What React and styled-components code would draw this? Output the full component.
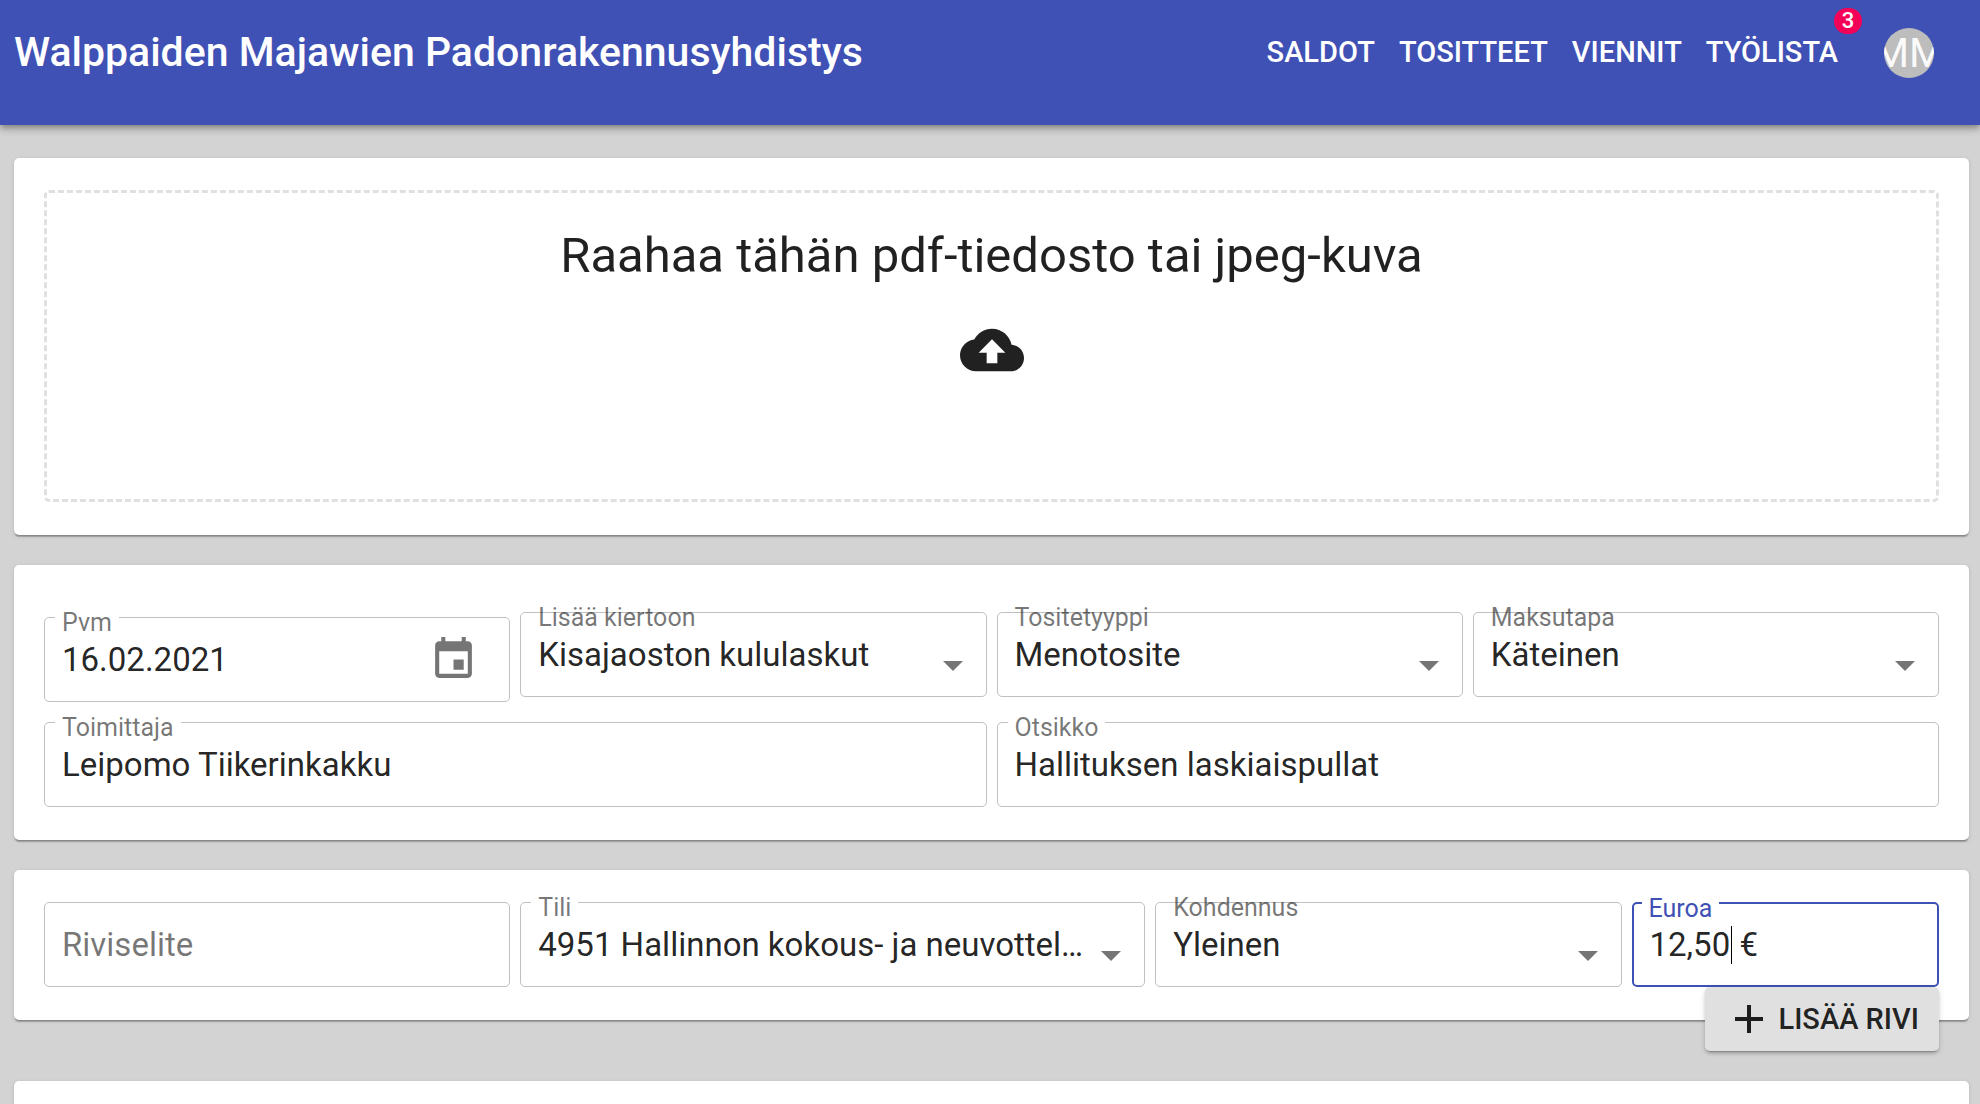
import React from 'react';
import styled, { createGlobalStyle } from 'styled-components';

const GlobalStyle = createGlobalStyle`
  *, *::before, *::after { box-sizing: border-box; }
  body {
    margin: 0;
    background: #d3d3d3;
    color: rgba(0, 0, 0, 0.87);
    font-family: Roboto, "Liberation Sans", sans-serif;
    font-size: 33px;
  }
  button, input, select { font: inherit; color: inherit; }
`;

const Page = styled.div`
  display: flex;
  flex-direction: column;
  height: 100vh;
  overflow: hidden;
`;

const AppBar = styled.header`
  flex: none;
  display: flex;
  align-items: flex-start;
  justify-content: space-between;
  padding: 28px 46px 47px 14px;
  background: #3f51b5;
  color: #fff;
  box-shadow: 0 3px 5px -1px rgba(0, 0, 0, 0.2), 0 5px 6px rgba(0, 0, 0, 0.14),
    0 1px 13px rgba(0, 0, 0, 0.12);
`;

const Title = styled.h1`
  margin: 0;
  font-size: 41px;
  font-weight: 500;
  line-height: 48px;
`;

const Nav = styled.nav`
  display: flex;
  align-items: flex-start;
  gap: 24px;
`;

const NavLink = styled.a`
  position: relative;
  color: inherit;
  font-size: 29px;
  font-weight: 500;
  line-height: 48px;
  text-decoration: none;
  text-transform: uppercase;
`;

const Badge = styled.span`
  position: absolute;
  top: -20px;
  right: -24px;
  display: grid;
  place-items: center;
  width: 28px;
  height: 26px;
  border-radius: 13px;
  background: #f50057;
  font-size: 22px;
  line-height: 26px;
`;

const Avatar = styled.button`
  display: flex;
  align-items: center;
  justify-content: center;
  width: 50px;
  height: 50px;
  margin-left: 22px;
  padding: 0;
  border: 0;
  border-radius: 50%;
  overflow: hidden;
  background: #bdbdbd;
  color: #fafafa;
  font-size: 41px;
  line-height: 50px;
`;

const Main = styled.main`
  display: flex;
  flex-direction: column;
  gap: 30px;
  padding: 33px 11px 0 14px;
`;

const Card = styled.section`
  flex: none;
  min-height: ${(p) => (p.$tall ? '200px' : '0')};
  padding: ${(p) => (p.$roomy ? '47px' : '32px')} 30px 33px;
  border-radius: 5px;
  background: #fff;
  box-shadow: 0 3px 1px -1px rgba(0, 0, 0, 0.2), 0 1px 1px rgba(0, 0, 0, 0.14),
    0 1px 4px rgba(0, 0, 0, 0.12);
`;

const DropZone = styled.label`
  display: flex;
  flex-direction: column;
  align-items: center;
  gap: 32px;
  height: 312px;
  padding-top: 33px;
  border: 3px dashed rgba(0, 0, 0, 0.12);
  border-radius: 5px;
  font-size: 49px;
  line-height: 60px;
`;

const FileInput = styled.input`
  position: absolute;
  width: 1px;
  height: 1px;
  opacity: 0;
`;

const Icon = styled.svg`
  flex: none;
  display: block;
  width: ${(p) => p.$size}px;
  height: ${(p) => p.$size}px;
  fill: currentColor;
`;

const Grid = styled.div`
  display: grid;
  grid-template-columns: repeat(12, minmax(0, 1fr));
  align-items: start;
  column-gap: 10px;
  row-gap: 20px;
`;

const Outline = styled.div`
  grid-column: span ${(p) => p.$span};
  position: relative;
  display: flex;
  align-items: center;
  height: 85px;
  margin-top: ${(p) => (p.$lowered ? '5px' : '0')};
  padding: 0 ${(p) => (p.$focused ? '16px' : '17px')};
  border: ${(p) => (p.$focused ? '2px solid #3f51b5' : '1px solid #c0c0c0')};
  border-radius: 5px;
`;

const Label = styled.label`
  position: absolute;
  top: -9px;
  left: ${(p) => (p.$focused ? '8px' : '10px')};
  padding: 0 7px;
  background: ${(p) => (p.$notched ? '#fff' : 'transparent')};
  color: ${(p) => (p.$focused ? '#3f51b5' : 'rgba(0, 0, 0, 0.54)')};
  font-size: 25px;
  line-height: 28px;
  white-space: nowrap;
  pointer-events: none;
`;

const TextInput = styled.input`
  flex: ${(p) => (p.$narrow ? 'none' : '1')};
  width: ${(p) => (p.$narrow ? '81px' : 'auto')};
  min-width: 0;
  height: 48px;
  padding: 0;
  border: 0;
  outline: 0;
  background: transparent;
  &::placeholder { color: rgba(0, 0, 0, 0.54); opacity: 1; }
`;

const Select = styled.select`
  flex: 1;
  min-width: 0;
  height: 83px;
  margin: 0 -17px;
  padding: 0 54px 0 17px;
  border: 0;
  outline: 0;
  appearance: none;
  background: transparent;
  text-overflow: ellipsis;
`;

const Arrow = styled(Icon)`
  position: absolute;
  top: calc(50% - 14px);
  right: 9px;
  color: rgba(0, 0, 0, 0.54);
  pointer-events: none;
`;

const IconButton = styled.button`
  flex: none;
  margin-right: 14px;
  padding: 0;
  border: 0;
  background: transparent;
  color: rgba(0, 0, 0, 0.54);
`;

const Caret = styled.span`
  width: 1px;
  height: 38px;
  background: #000;
`;

const Adornment = styled.span`
  margin-left: 8px;
`;

const Actions = styled.div`
  display: flex;
  justify-content: flex-end;
  margin-top: -63px;
  padding-right: 30px;
`;

const AddButton = styled.button`
  position: relative;
  display: flex;
  align-items: center;
  gap: 6px;
  height: 64px;
  padding: 0 20px;
  border: 0;
  border-radius: 5px;
  background: #e0e0e0;
  font-size: 29px;
  font-weight: 500;
  text-transform: uppercase;
  box-shadow: 0 4px 1px -3px rgba(0, 0, 0, 0.2), 0 3px 3px rgba(0, 0, 0, 0.14),
    0 1px 6px rgba(0, 0, 0, 0.12);
`;

function Field({ id, label, span, lowered, notched = true, focused, children }) {
  return (
    <Outline $span={span} $lowered={lowered} $focused={focused}>
      {label && (
        <Label htmlFor={id} $notched={notched} $focused={focused}>
          {label}
        </Label>
      )}
      {children}
    </Outline>
  );
}

function SelectField({ id, value, ...field }) {
  return (
    <Field id={id} {...field}>
      <Select id={id} defaultValue={value}>
        <option value={value}>{value}</option>
      </Select>
      <Arrow $size={48} viewBox="0 0 24 24" aria-hidden="true">
        <path d="M7 10l5 5 5-5z" />
      </Arrow>
    </Field>
  );
}

export default function App() {
  return (
    <Page>
      <GlobalStyle />
      <AppBar>
        <Title>Walppaiden Majawien Padonrakennusyhdistys</Title>
        <Nav>
          <NavLink href="#saldot">Saldot</NavLink>
          <NavLink href="#tositteet">Tositteet</NavLink>
          <NavLink href="#viennit">Viennit</NavLink>
          <NavLink href="#tyolista">
            Työlista
            <Badge>3</Badge>
          </NavLink>
          <Avatar type="button">MM</Avatar>
        </Nav>
      </AppBar>
      <Main>
        <Card>
          <DropZone>
            Raahaa tähän pdf-tiedosto tai jpeg-kuva
            <Icon $size={64} viewBox="0 0 24 24" aria-hidden="true">
              <path d="M19.35 10.04C18.67 6.59 15.64 4 12 4 9.11 4 6.6 5.64 5.35 8.04 2.34 8.36 0 10.91 0 14c0 3.31 2.69 6 6 6h13c2.76 0 5-2.24 5-5 0-2.64-2.05-4.78-4.65-4.96zM14 13v4h-4v-4H7l5-5 5 5h-3z" />
            </Icon>
            <FileInput type="file" accept="application/pdf,image/jpeg" />
          </DropZone>
        </Card>

        <Card $roomy>
          <Grid>
            <Field id="date" label="Pvm" span={3} lowered>
              <TextInput id="date" defaultValue="16.02.2021" />
              <IconButton type="button" aria-label="Pvm">
                <Icon $size={49} viewBox="0 0 24 24" aria-hidden="true">
                  <path d="M17 12h-5v5h5v-5zM16 1v2H8V1H6v2H5c-1.11 0-1.99.9-1.99 2L3 19c0 1.1.89 2 2 2h14c1.1 0 2-.9 2-2V5c0-1.1-.9-2-2-2h-1V1h-2zm3 18H5V8h14v11z" />
                </Icon>
              </IconButton>
            </Field>
            <SelectField id="circulation" label="Lisää kiertoon" span={3} notched={false} value="Kisajaoston kululaskut" />
            <SelectField id="type" label="Tositetyyppi" span={3} notched={false} value="Menotosite" />
            <SelectField id="payment" label="Maksutapa" span={3} notched={false} value="Käteinen" />
            <Field id="supplier" label="Toimittaja" span={6}>
              <TextInput id="supplier" defaultValue="Leipomo Tiikerinkakku" />
            </Field>
            <Field id="title" label="Otsikko" span={6}>
              <TextInput id="title" defaultValue="Hallituksen laskiaispullat" />
            </Field>
          </Grid>
        </Card>

        <Card>
          <Grid>
            <Field span={3}>
              <TextInput placeholder="Riviselite" aria-label="Riviselite" />
            </Field>
            <SelectField id="account" label="Tili" span={4} value="4951 Hallinnon kokous- ja neuvottel…" />
            <SelectField id="target" label="Kohdennus" span={3} notched={false} value="Yleinen" />
            <Field id="euros" label="Euroa" span={2} focused>
              <TextInput id="euros" $narrow inputMode="decimal" defaultValue="12,50" />
              <Caret />
              <Adornment>€</Adornment>
            </Field>
          </Grid>
        </Card>
        <Actions>
          <AddButton type="button">
            <Icon $size={48} viewBox="0 0 24 24" aria-hidden="true">
              <path d="M19 13h-6v6h-2v-6H5v-2h6V5h2v6h6v2z" />
            </Icon>
            Lisää rivi
          </AddButton>
        </Actions>

        <Card $tall />
      </Main>
    </Page>
  );
}
